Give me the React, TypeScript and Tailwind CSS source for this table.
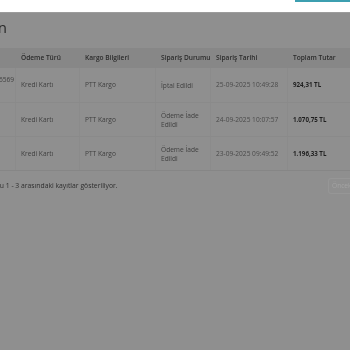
import React from "react";

const rows = [
  { no: "6569", pay: "Kredi Kartı", cargo: "PTT Kargo", status: ["İptal Edildi"], date: "25-09-2025 10:49:28", total: "924,31 TL" },
  { no: "", pay: "Kredi Kartı", cargo: "PTT Kargo", status: ["Ödeme İade", "Edildi"], date: "24-09-2025 10:07:57", total: "1.070,75 TL" },
  { no: "", pay: "Kredi Kartı", cargo: "PTT Kargo", status: ["Ödeme İade", "Edildi"], date: "23-09-2025 09:49:52", total: "1.196,33 TL" },
];

const cols = "grid grid-cols-[16px_64px_76px_55px_77px_62px]";

export default function App() {
  return (
    <div
      className="w-[350px] h-[350px] overflow-hidden bg-[#8f8f8f] flex flex-col"
      style={{ fontFamily: "'Open Sans', Lato, sans-serif" }}
    >
      <div className="h-[13px] shrink-0 bg-white flex justify-end border-b border-[#9c9c9c]">
        <div className="w-[55px] h-[2px] bg-[#3c9fb0]" />
      </div>
      <div className="flex flex-col blur-[0.3px]">
        <div className="h-[35px] flex items-center pb-[7px]">
          <div className="w-[7px] flex justify-end whitespace-nowrap text-[15px] font-medium text-[#262626] leading-none">
            Siparişlerin
          </div>
        </div>
        <div className="flex flex-col border-b border-[#868686]">
          <div className={`${cols} h-[20px] bg-[#878787] items-center text-[6.6px] font-semibold text-[#2b2b2b]`}>
            <div />
            <div className="pl-[5px] whitespace-nowrap">Ödeme Türü</div>
            <div className="pl-[5px] whitespace-nowrap">Kargo Bilgileri</div>
            <div className="pl-[5px] whitespace-nowrap">Sipariş Durumu</div>
            <div className="pl-[5px] whitespace-nowrap">Sipariş Tarihi</div>
            <div className="pl-[5px] whitespace-nowrap">Toplam Tutar</div>
          </div>
          {rows.map((r, i) => (
            <div
              key={i}
              className={`${cols} h-[34px] items-stretch text-[6.6px] text-[#404040] ${i > 0 ? "border-t border-[#8a8a8a]" : ""}`}
            >
              <div className="flex justify-end pt-[7px] pr-[1px] border-r border-[#8b8b8b] whitespace-nowrap">
                {r.no}
              </div>
              <div className="pl-[5px] flex items-center border-r border-[#8b8b8b] whitespace-nowrap">{r.pay}</div>
              <div className="pl-[5px] flex items-center border-r border-[#8b8b8b] whitespace-nowrap">{r.cargo}</div>
              <div className="pl-[5px] flex flex-col justify-center leading-[9px] border-r border-[#8b8b8b]">
                {r.status.map((s) => (
                  <span key={s} className="whitespace-nowrap">{s}</span>
                ))}
              </div>
              <div className="pl-[5px] flex items-center text-[#4a4a4a] border-r border-[#8b8b8b] whitespace-nowrap">{r.date}</div>
              <div className="pl-[5px] flex items-center font-bold text-[#1e1e1e] text-[6.2px] whitespace-nowrap">{r.total}</div>
            </div>
          ))}
        </div>
        <div className="h-[30px] flex items-center justify-between">
          <div className="flex text-[6.8px] text-[#2e2e2e] whitespace-nowrap">
            <span className="w-[4px] flex justify-end">Toplam 3 kayıt bulundu</span>
            <span>&nbsp;1 - 3 arasındaki kayıtlar gösteriliyor.</span>
          </div>
          <div className="h-[16px] w-[22px] shrink-0 border border-[#969696] rounded-l-[3px] border-r-0 flex items-center pl-[3px] text-[6.6px] text-[#a3a3a3] whitespace-nowrap overflow-hidden">
            Önceki
          </div>
        </div>
      </div>
    </div>
  );
}
